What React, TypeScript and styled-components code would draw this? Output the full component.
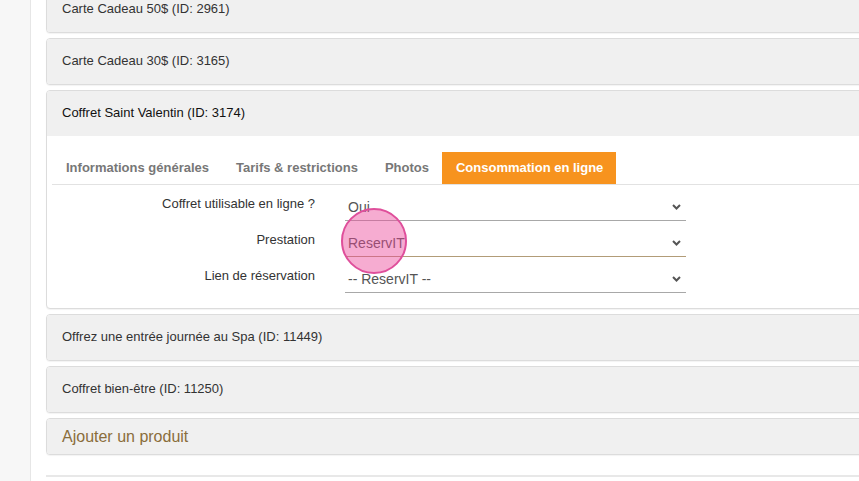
import React from 'react'
import styled, { createGlobalStyle } from 'styled-components'

const GlobalStyle = createGlobalStyle`
  html, body {
    margin: 0;
    padding: 0;
    background: #fff;
    overflow: hidden;
  }
  body {
    font-family: "Liberation Sans", Arial, sans-serif;
    color: #333;
  }
`

const Page = styled.div`
  display: flex;
  height: 481px;
  width: 859px;
  overflow: hidden;
`

const SideStrip = styled.div`
  width: 30px;
  flex-shrink: 0;
  background: #f7f7f7;
  border-right: 1px solid #e6e6e6;
`

const Main = styled.div`
  flex: 1;
  min-width: 0;
  padding-left: 15px;
`

const PanelList = styled.div`
  margin-top: -14px;
  margin-right: -20px;
  display: flex;
  flex-direction: column;
  gap: 5px;
`

const Panel = styled.div`
  border: 1px solid #dcdcdc;
  border-radius: 4px;
  background: #fff;
  box-shadow: 0 1px 1px rgba(0, 0, 0, 0.05);
`

const PanelHeading = styled.div<{ $open?: boolean }>`
  background: #f0f0f0;
  padding: 14px 15px 15px;
  font-size: 13px;
  line-height: 16px;
  color: ${({ $open }) => ($open ? '#111' : '#333')};
  border-radius: ${({ $open }) => ($open ? '3px 3px 0 0' : '3px')};
`

const AddHeading = styled.div`
  background: #f0f0f0;
  padding: 9px 15px;
  font-size: 16px;
  line-height: 17px;
  color: #8a6d3b;
  border-radius: 3px;
`

const PanelBody = styled.div`
  padding: 16px 0 15px 5px;
`

const TabBar = styled.div`
  display: flex;
  border-bottom: 1px solid #e2e2e2;
`

const Tab = styled.div<{ $active?: boolean }>`
  height: 32px;
  padding: 0 13px 1px 14px;
  box-sizing: border-box;
  display: flex;
  align-items: center;
  font-size: 13px;
  font-weight: bold;
  color: ${({ $active }) => ($active ? '#fff' : '#777')};
  background: ${({ $active }) => ($active ? '#f7931e' : 'transparent')};
`

const Form = styled.div`
  display: grid;
  grid-template-columns: 263px 341px;
  column-gap: 30px;
  row-gap: 3px;
  padding-top: 3px;
`

const Label = styled.div`
  text-align: right;
  font-size: 13px;
  line-height: 15px;
  padding-top: 8px;
  color: #333;
`

const SelectBox = styled.div<{ $focused?: boolean }>`
  position: relative;
  height: 33px;
  display: flex;
  align-items: center;
  padding: 6px 5px 0 3px;
  box-sizing: border-box;
  border-bottom: 1px solid ${({ $focused }) => ($focused ? '#b29c78' : '#a8a8a8')};
  font-size: 14px;
  color: #555;
`

const SelectText = styled.span`
  flex: 1;
`

const Chevron = () => (
  <svg width="9" height="6" viewBox="0 0 9 6">
    <path d="M1 1l3.5 3.5L8 1" fill="none" stroke="#555" strokeWidth="2" />
  </svg>
)

const ClickMark = styled.div`
  position: absolute;
  left: -4px;
  top: -16px;
  width: 62px;
  height: 62px;
  border-radius: 50%;
  background: rgba(236, 72, 153, 0.45);
  border: 2px solid #df4f9b;
  pointer-events: none;
`

const Rule = styled.div`
  margin-top: 20px;
  border-top: 2px solid #e8e8e8;
`

const closedAbove = ['Carte Cadeau 50$ (ID: 2961)', 'Carte Cadeau 30$ (ID: 3165)']
const closedBelow = ['Offrez une entrée journée au Spa (ID: 11449)', 'Coffret bien-être (ID: 11250)']
const tabs = ['Informations générales', 'Tarifs & restrictions', 'Photos', 'Consommation en ligne']

export default function App() {
  return (
    <Page>
      <GlobalStyle />
      <SideStrip />
      <Main>
        <PanelList>
          {closedAbove.map((t) => (
            <Panel key={t}>
              <PanelHeading>{t}</PanelHeading>
            </Panel>
          ))}
          <Panel>
            <PanelHeading $open>Coffret Saint Valentin (ID: 3174)</PanelHeading>
            <PanelBody>
              <TabBar>
                {tabs.map((t, i) => (
                  <Tab key={t} $active={i === 3}>
                    {t}
                  </Tab>
                ))}
              </TabBar>
              <Form>
                <Label>Coffret utilisable en ligne ?</Label>
                <SelectBox>
                  <SelectText>Oui</SelectText>
                  <Chevron />
                </SelectBox>
                <Label>Prestation</Label>
                <SelectBox $focused>
                  <SelectText>ReservIT</SelectText>
                  <Chevron />
                  <ClickMark />
                </SelectBox>
                <Label>Lien de réservation</Label>
                <SelectBox>
                  <SelectText>-- ReservIT --</SelectText>
                  <Chevron />
                </SelectBox>
              </Form>
            </PanelBody>
          </Panel>
          {closedBelow.map((t) => (
            <Panel key={t}>
              <PanelHeading>{t}</PanelHeading>
            </Panel>
          ))}
          <Panel>
            <AddHeading>Ajouter un produit</AddHeading>
          </Panel>
        </PanelList>
        <Rule />
      </Main>
    </Page>
  )
}
